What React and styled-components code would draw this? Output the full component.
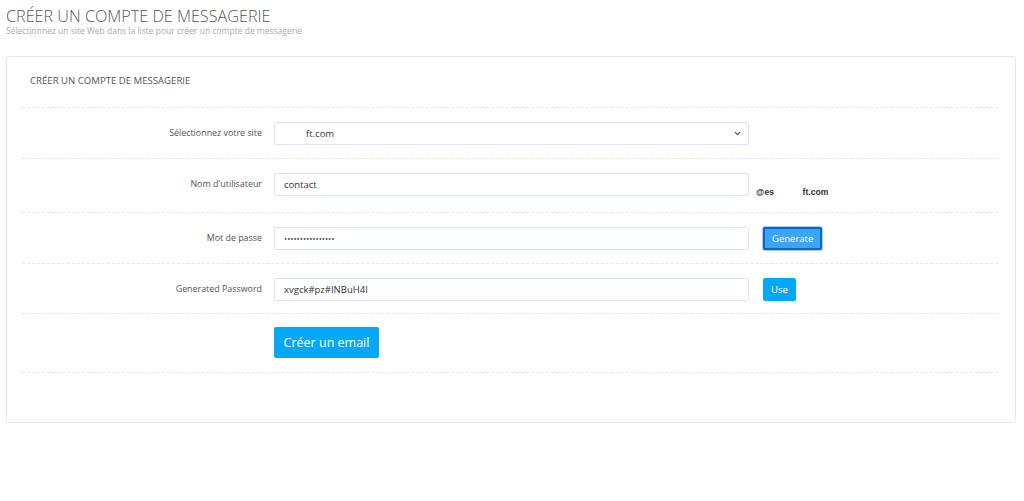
import React from 'react';
import styled, { createGlobalStyle } from 'styled-components';
import { ChevronDown } from 'lucide-react';

const GlobalStyle = createGlobalStyle`
  html, body {
    margin: 0;
    padding: 0;
    background: #fff;
    font-family: "Open Sans", "Liberation Sans", sans-serif;
    color: #555;
  }
`;

const Page = styled.div`
  padding: 6px 8px 0 6px;
`;

const Title = styled.h1`
  margin: 0;
  font-size: 16.2px;
  font-weight: 300;
  color: #555;
  line-height: 20px;
`;

const Subtitle = styled.div`
  font-size: 8.5px;
  color: #aaa;
  line-height: 10px;
  margin-bottom: 20px;
`;

const Card = styled.div`
  border: 1px solid #e2e8f2;
  border-radius: 3px;
  width: 1010px;
  height: 367px;
  box-sizing: border-box;
  padding: 0 17px 0 15px;
`;

const CardHeader = styled.div`
  padding: 17px 8px 19px 8px;
  font-size: 9.6px;
  line-height: 14px;
  color: #555;
  text-transform: uppercase;
  border-bottom: 1px dashed #dfe7f2;
`;

const Row = styled.div`
  display: flex;
  align-items: flex-start;
  padding: 14px 0 ${p => p.$bottom ?? 13}px;
  border-bottom: 1px dashed #dfe7f2;
`;

const Label = styled.label`
  width: 252px;
  box-sizing: border-box;
  padding-right: 12px;
  text-align: right;
  font-size: 8.9px;
  color: #555;
  line-height: 22px;
  flex-shrink: 0;
`;

const Field = styled.div`
  position: relative;
  width: 475px;
  flex-shrink: 0;
`;

const inputCss = `
  display: block;
  width: 100%;
  height: 23px;
  box-sizing: border-box;
  border: 1px solid #dde5ee;
  border-radius: 2px;
  background: #fff;
  font-family: "Open Sans", "Liberation Sans", sans-serif;
  font-size: 9.5px;
  color: #333;
  outline: none;
  margin: 0;
`;

const Input = styled.input`
  ${inputCss}
  padding: 0 9px;
  font-size: ${p => (p.type === 'password' ? '8.4px' : '9.5px')};
  color: ${p => (p.type === 'password' ? '#555' : '#333')};
`;

const Select = styled.select`
  ${inputCss}
  appearance: none;
  padding: 0 20px 0 31px;
`;

const Chevron = styled(ChevronDown)`
  position: absolute;
  right: 7px;
  top: 7px;
  color: #555;
  pointer-events: none;
`;

const Addon = styled.div`
  margin-left: ${p => p.$gap}px;
  margin-top: ${p => p.$drop || 0}px;
  display: flex;
  align-items: center;
`;

const Domain = styled.span`
  font-size: 8.6px;
  font-weight: 700;
  color: #333;
  line-height: 13px;
  white-space: pre;
  font-family: "Liberation Sans", Arial, sans-serif;
`;

const SmallButton = styled.button`
  height: 23px;
  padding: 0 ${p => p.$pad}px;
  border-radius: 2px;
  font-family: "Open Sans", "Liberation Sans", sans-serif;
  font-size: 9.5px;
  color: #fff;
  cursor: pointer;
  background: ${p => (p.$focused ? '#3aa5f2' : '#05a8f5')};
  border: ${p => (p.$focused ? '2px solid #1c5fb8' : '1px solid #05a8f5')};
  box-shadow: ${p => (p.$focused ? '0 0 0 1px #9fd0fa' : 'none')};
`;

const SubmitRow = styled.div`
  padding: 13px 0 14px 252px;
  border-bottom: 1px dashed #dfe7f2;
`;

const SubmitButton = styled.button`
  display: block;
  width: 105px;
  height: 31px;
  border: none;
  border-radius: 2px;
  background: #05a8f5;
  color: #fff;
  font-family: "Open Sans", "Liberation Sans", sans-serif;
  font-size: 12.5px;
  cursor: pointer;
`;

export default function App() {
  return (
    <Page>
      <GlobalStyle />
      <Title>CRÉER UN COMPTE DE MESSAGERIE</Title>
      <Subtitle>Sélectionnez un site Web dans la liste pour créer un compte de messagerie</Subtitle>
      <Card>
        <CardHeader>Créer un compte de messagerie</CardHeader>

        <Row>
          <Label>Sélectionnez votre site</Label>
          <Field>
            <Select defaultValue="site">
              <option value="site">ft.com</option>
            </Select>
            <Chevron size={9} strokeWidth={3.5} />
          </Field>
        </Row>

        <Row>
          <Label>Nom d'utilisateur</Label>
          <Field>
            <Input defaultValue="contact" />
          </Field>
          <Addon $gap={7} $drop={13}>
            <Domain>{'@es            ft.com'}</Domain>
          </Addon>
        </Row>

        <Row>
          <Label>Mot de passe</Label>
          <Field>
            <Input type="password" defaultValue="xvgck#pz#INBuH4I" />
          </Field>
          <Addon $gap={14}>
            <SmallButton $pad={7} $focused>Generate</SmallButton>
          </Addon>
        </Row>

        <Row $bottom={12}>
          <Label>Generated Password</Label>
          <Field>
            <Input defaultValue="xvgck#pz#INBuH4I" />
          </Field>
          <Addon $gap={14}>
            <SmallButton $pad={7}>Use</SmallButton>
          </Addon>
        </Row>

        <SubmitRow>
          <SubmitButton>Créer un email</SubmitButton>
        </SubmitRow>
      </Card>
    </Page>
  );
}
